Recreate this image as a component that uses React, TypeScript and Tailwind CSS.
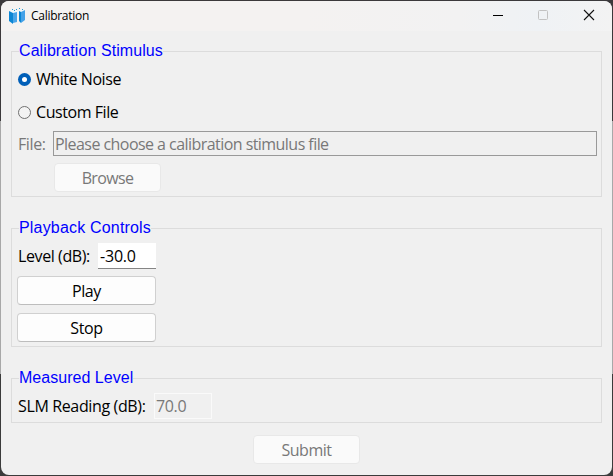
import type { ReactNode } from "react";

function Group({ title, className, tracking, children }: { title: string; className: string; tracking: string; children: ReactNode }) {
  return (
    <section className={`mx-[10px] border border-[#dcdcdc] ${className}`}>
      <h2 className={`ml-[7px] -mt-[11px] h-5 w-fit bg-[#f0f0f0] font-['Liberation_Sans',Arial,sans-serif] text-[16px] leading-5 whitespace-nowrap text-[#0000ff] ${tracking}`}>
        {title}
      </h2>
      {children}
    </section>
  );
}

function Radio({ label, checked }: { label: string; checked?: boolean }) {
  return (
    <label className="flex h-[22px] items-center">
      <span
        className={
          checked
            ? "flex size-[13px] items-center justify-center rounded-full bg-[#005fb8]"
            : "size-[13px] rounded-full border border-[#707070] bg-[#f3f3f3]"
        }
      >
        {checked && <span className="size-[5px] rounded-full bg-white" />}
      </span>
      <span className="ml-[5px]">{label}</span>
    </label>
  );
}

function TitleBar() {
  return (
    <header className="flex h-[30px] shrink-0 items-center bg-[linear-gradient(90deg,#f4f2f1_0_50%,#f2f2f2_75%,#eff2f5_88%,#f3f3f3)]">
      <svg className="ml-2 h-4 w-4" viewBox="0 0 16 16">
        <path d="M0 4 4 2 8 3 14 2 16 3 12 5 4 5Z" fill="#eef8fd" />
        <path d="M0 3 4 5V16L0 13Z" fill="#0c86d4" />
        <path d="M4 5 8 4V14L4 15Z" fill="#4aa5e8" />
        <path d="M10 3 12 4V15L10 13Z" fill="#0c86d4" />
        <path d="M12 4 16 2V12L12 15Z" fill="#45a2e8" />
        <path d="M3 1h1v1H3zM5 2h1v1H5zM7 1h1v1H7zM10 0h1v1h-1zM13 1h1v1h-1z" fill="#2398d2" />
      </svg>
      <h1 className="ml-[6px] flex-1 text-[12px] tracking-[-0.28px]">Calibration</h1>
      <svg className="h-[30px] w-[138px]" viewBox="0 0 138 30" fill="none">
        <path d="M19 14.5h10" stroke="#000" />
        <rect x="64.5" y="9.5" width="9" height="9" rx="1" stroke="#c2c2c2" />
        <path d="m110 9 10 10m0-10-10 10" stroke="#111" strokeWidth="1.1" />
      </svg>
    </header>
  );
}

export default function App() {
  return (
    <div className="h-[476px] w-[613px] overflow-hidden bg-[linear-gradient(#3b393b_0_121px,#a8a8a8_121px_374px,#3b3b3b_374px)] p-px font-['Open_Sans','Noto_Sans',sans-serif] text-[16px] leading-[22px] whitespace-nowrap text-black">
      <main className="flex h-[474px] w-[611px] flex-col overflow-hidden rounded-[8px] bg-[#f0f0f0]">
        <TitleBar />
        <Group title="Calibration Stimulus" className="mt-5 h-[146px]" tracking="tracking-[0.08px]">
          <div className="flex flex-col gap-[11px] pl-[6px] pt-[7px] tracking-[-0.44px]">
            <Radio label="White Noise" checked />
            <Radio label="Custom File" />
          </div>
          <div className="mt-2 flex h-[25px] items-center pl-[6px] tracking-[-0.4px] text-[#787878]">
            <span className="w-[35px]">File:</span>
            <div className="flex h-[25px] w-[544px] items-center border border-[#999999] pl-px tracking-[-0.55px]">
              Please choose a calibration stimulus file
            </div>
          </div>
          <button className="mt-[7px] ml-[42px] block h-[29px] w-[107px] rounded border border-[#e8e8e8] bg-[#fafafa] pt-px tracking-[-0.65px] text-[#787878]">
            Browse
          </button>
        </Group>
        <Group title="Playback Controls" className="mt-[31px] h-[119px]" tracking="tracking-[0.18px]">
          <div className="mt-[5px] flex h-[26px] items-center pl-[6px] tracking-[-0.4px]">
            <span className="w-[80px]">Level (dB):</span>
            <div className="flex h-[26px] w-[58px] items-center border-b border-[#858585] bg-white pl-[2px] pt-px tracking-[-0.2px]">-30.0</div>
          </div>
          <div className="mt-[7px] flex flex-col gap-2 pl-[5px] tracking-[-0.4px]">
            <button className="h-[29px] w-[139px] rounded border border-[#d0d0d0] border-b-[#bdbdbd] bg-[#fdfdfd]">Play</button>
            <button className="h-[29px] w-[139px] rounded border border-[#d0d0d0] border-b-[#bdbdbd] bg-[#fdfdfd] pt-px">Stop</button>
          </div>
        </Group>
        <Group title="Measured Level" className="mt-[31px] h-[45px]" tracking="tracking-[0.03px]">
          <div className="mt-[5px] flex h-[26px] items-center pl-[6px] tracking-[-0.36px]">
            <span className="w-[136px]">SLM Reading (dB):</span>
            <div className="flex h-[26px] w-[58px] items-center border border-[#fafafa] pl-px text-[#787878]">70.0</div>
          </div>
        </Group>
        <button className="mt-3 ml-[252px] block h-[29px] w-[107px] shrink-0 rounded border border-[#e8e8e8] bg-[#fafafa] pt-px tracking-[-0.45px] text-[#787878]">
          Submit
        </button>
      </main>
    </div>
  );
}
